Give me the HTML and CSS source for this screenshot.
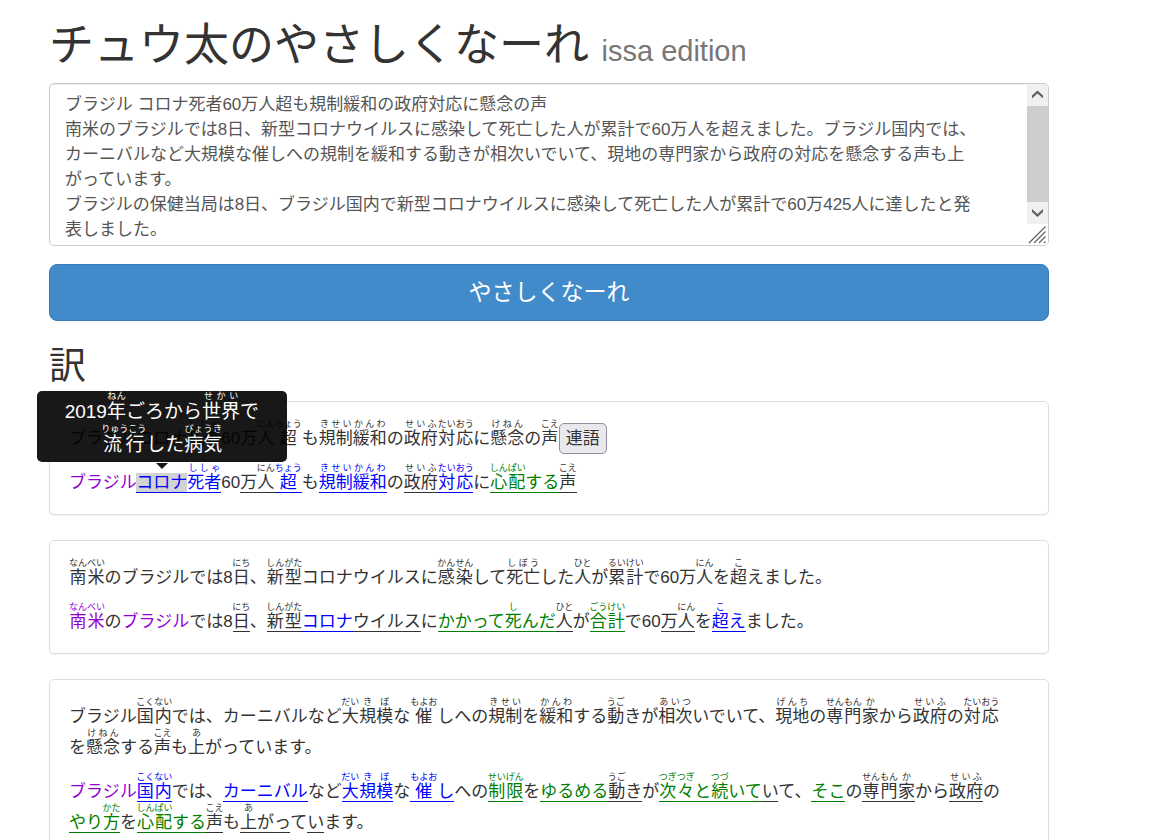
FILE: index.html
```html
<!DOCTYPE html>
<html lang="ja">
<head>
<meta charset="utf-8">
<title>チュウ太のやさしくなーれ</title>
<link rel="stylesheet" href="styles.css">
</head>
<body>
<main class="container">
  <h1 class="title">チュウ太のやさしくなーれ <small>issa edition</small></h1>
  <form class="form">
    <div class="source-box">
      <textarea class="source" aria-label="原文">ブラジル コロナ死者60万人超も規制緩和の政府対応に懸念の声
南米のブラジルでは8日、新型コロナウイルスに感染して死亡した人が累計で60万人を超えました。ブラジル国内では、カーニバルなど大規模な催しへの規制を緩和する動きが相次いでいて、現地の専門家から政府の対応を懸念する声も上がっています。
ブラジルの保健当局は8日、ブラジル国内で新型コロナウイルスに感染して死亡した人が累計で60万425人に達したと発表しました。
</textarea>
      <div class="scrollbar" aria-hidden="true">
        <svg class="arrow" viewBox="0 0 21 21"><path d="M5 11v3l5.500-5 5.500 5v-3L10.500 6z"/></svg>
        <div class="thumb"></div>
        <svg class="arrow" viewBox="0 0 21 21"><path d="M5 9.500v-3l5.500 5 5.500-5v3L10.500 14.500z"/></svg>
        <svg class="grip" viewBox="0 0 21 21"><path d="M2 19 18.500 2.500M7 19 18.500 7.500M12 19l6.500-6.500M17 19l1.500-1.500"/></svg>
      </div>
    </div>
    <button type="button" class="submit">やさしくなーれ</button>
  </form>
  <h2 class="heading">訳</h2>

  <section class="card">
    <p>ブラジルコロナ<ruby>死者<rt>ししゃ</rt></ruby>60万<ruby>人<rt>にん</rt></ruby><span class="wide"><ruby>超<rt>ちょう</rt></ruby></span>も<ruby>規制緩和<rt>きせいかんわ</rt></ruby>の<ruby>政府<rt>せいふ</rt></ruby><ruby>対応<rt>たいおう</rt></ruby>に<ruby>懸念<rt>けねん</rt></ruby>の<ruby>声<rt>こえ</rt></ruby><button type="button" class="tag">連語</button></p>
    <p><span class="name">ブラジル</span><span class="word easy active">コロナ<span class="tooltip" role="tooltip">2019<ruby>年<rt>ねん</rt></ruby>ごろから<ruby>世界<rt>せかい</rt></ruby>で<br><span class="wide"><ruby>流行<rt>りゅうこう</rt></ruby></span>した<ruby>病気<rt>びょうき</rt></ruby></span></span><span class="word easy"><ruby>死者<rt>ししゃ</rt></ruby></span>60<span class="word">万<ruby>人<rt>にん</rt></ruby></span><span class="word easy"><span class="wide"><ruby>超<rt>ちょう</rt></ruby></span></span>も<span class="word easy"><ruby>規制緩和<rt>きせいかんわ</rt></ruby></span>の<span class="word"><ruby>政府<rt>せいふ</rt></ruby></span><span class="word easy"><ruby>対応<rt>たいおう</rt></ruby></span>に<span class="word changed"><ruby>心配<rt>しんぱい</rt></ruby>する</span><span class="word"><ruby>声<rt>こえ</rt></ruby></span></p>
  </section>

  <section class="card">
    <p><ruby>南米<rt>なんべい</rt></ruby>のブラジルでは8<ruby>日<rt>にち</rt></ruby>、<ruby>新型<rt>しんがた</rt></ruby>コロナウイルスに<ruby>感染<rt>かんせん</rt></ruby>して<ruby>死亡<rt>しぼう</rt></ruby>した<ruby>人<rt>ひと</rt></ruby>が<ruby>累計<rt>るいけい</rt></ruby>で60万<ruby>人<rt>にん</rt></ruby>を<ruby>超<rt>こ</rt></ruby>えました。</p>
    <p><span class="name"><ruby>南米<rt>なんべい</rt></ruby></span>の<span class="name">ブラジル</span>では8<span class="word"><ruby>日<rt>にち</rt></ruby></span>、<span class="word"><ruby>新型<rt>しんがた</rt></ruby></span><span class="word easy">コロナ</span><span class="word">ウイルス</span>に<span class="word changed">かかって<ruby>死<rt>し</rt></ruby>んだ</span><span class="word"><ruby>人<rt>ひと</rt></ruby></span>が<span class="word changed"><ruby>合計<rt>ごうけい</rt></ruby></span>で60<span class="word">万<ruby>人<rt>にん</rt></ruby></span>を<span class="word easy"><ruby>超<rt>こ</rt></ruby>え</span>ました。</p>
  </section>

  <section class="card">
    <p>ブラジル<ruby>国内<rt>こくない</rt></ruby>では、カーニバルなど<ruby>大<rt>だい</rt></ruby><ruby>規模<rt>きぼ</rt></ruby>な<span class="wide"><ruby>催<rt>もよお</rt></ruby></span>しへの<ruby>規制<rt>きせい</rt></ruby>を<ruby>緩和<rt>かんわ</rt></ruby>する<ruby>動<rt>うご</rt></ruby>きが<ruby>相次<rt>あいつ</rt></ruby>いでいて、<ruby>現地<rt>げんち</rt></ruby>の<ruby>専門<rt>せんもん</rt></ruby><ruby>家<rt>か</rt></ruby>から<ruby>政府<rt>せいふ</rt></ruby>の<ruby>対応<rt>たいおう</rt></ruby>を<ruby>懸念<rt>けねん</rt></ruby>する<ruby>声<rt>こえ</rt></ruby>も<ruby>上<rt>あ</rt></ruby>がっています。</p>
    <p><span class="name">ブラジル</span><span class="word easy"><ruby>国内<rt>こくない</rt></ruby></span>では、<span class="word easy">カーニバル</span>など<span class="word easy"><ruby>大<rt>だい</rt></ruby><ruby>規模<rt>きぼ</rt></ruby></span>な<span class="word easy"><span class="wide"><ruby>催<rt>もよお</rt></ruby></span>し</span>への<span class="word changed"><ruby>制限<rt>せいげん</rt></ruby></span>を<span class="word changed">ゆるめる</span><span class="word"><ruby>動<rt>うご</rt></ruby>き</span>が<span class="word changed"><ruby>次々<rt>つぎつぎ</rt></ruby>と<ruby>続<rt>つづ</rt></ruby>いて</span><span class="word">い</span>て、<span class="word changed">そこ</span>の<span class="word"><ruby>専門<rt>せんもん</rt></ruby><ruby>家<rt>か</rt></ruby></span>から<span class="word"><ruby>政府<rt>せいふ</rt></ruby></span>の<span class="word changed">やり<ruby>方<rt>かた</rt></ruby></span>を<span class="word changed"><ruby>心配<rt>しんぱい</rt></ruby>する</span><span class="word"><ruby>声<rt>こえ</rt></ruby></span>も<span class="word"><ruby>上<rt>あ</rt></ruby>がっ</span>て<span class="word">い</span>ます。</p>
  </section>
</main>
</body>
</html>
```
FILE: styles.css
```css
* {
  box-sizing: border-box;
}

body {
  margin: 0;
  background: #fff;
  color: #333;
  font-family: "Liberation Sans", "Noto Sans CJK JP", sans-serif;
  font-size: 17px;
  line-height: 25px;
}

.container {
  padding: 20px 103px 0 49px;
}

.title,
.heading {
  margin: 0;
  font-weight: 400;
}

.title {
  font-size: 45px;
  line-height: 52px;
}

.title small {
  color: #777;
  font-size: 29px;
}

.form {
  display: flex;
  flex-direction: column;
  gap: 18px;
  margin-top: 6px;
}

.source-box {
  position: relative;
  display: flex;
}

.source {
  flex: 1;
  height: 163px;
  padding: 8px 71px 8px 15px;
  border: 1px solid #ccc;
  border-radius: 5px;
  box-shadow: inset 0 1px 1px rgba(0, 0, 0, 0.08);
  color: #555;
  font: inherit;
  line-height: 25px;
  resize: none;
  scrollbar-width: none;
}

/* Scroll bar and resize grip laid over the right edge of the text box */
.scrollbar {
  position: absolute;
  top: 1px;
  right: 1px;
  bottom: 1px;
  display: flex;
  flex-direction: column;
  width: 21px;
  border-radius: 0 4px 4px 0;
  overflow: hidden;
}

.thumb {
  flex: 1;
  background: #cdcdcd;
}

.arrow {
  height: 22px;
  background: #f0f0f0;
  fill: #606060;
}

.grip {
  height: 21px;
  background: #fff;
  fill: none;
  stroke: #666;
  stroke-width: 1.3;
}

.submit {
  width: 100%;
  padding: 13px 20px;
  border: 1px solid #357ebd;
  border-radius: 8px;
  background: #428bca;
  color: #fff;
  font: inherit;
  font-size: 23px;
  line-height: 29px;
}

.heading {
  margin-top: 25px;
  margin-bottom: 13px;
  font-size: 37px;
  line-height: 42px;
}

.card {
  margin-bottom: 25px;
  padding: 17px 39px 20px 19px;
  border: 1px solid #ddd;
  border-radius: 5px;
  box-shadow: 0 1px 1px rgba(0, 0, 0, 0.05);
}

.card p {
  margin: 0;
  line-height: 23px;
}

.card p + p {
  margin-top: 13px;
}

rt {
  font-size: 9px;
  line-height: 9px;
}

/* Keeps a reading that is wider than its base off the kana beside it */
.wide {
  display: inline-block;
}

.word {
  border-bottom: 1px solid currentColor;
}

.name {
  color: #9400d3;
}

.easy {
  color: #00f;
}

.changed {
  color: #008000;
}

.active {
  position: relative;
  background: #d3d3d3;
}

.tag {
  margin: -4px 0;
  padding: 2px 6px;
  border: 1px solid #8f8f9d;
  border-radius: 5px;
  background: #e9e9ed;
  color: #333;
  font: inherit;
  line-height: 25px;
}

.card .tooltip {
  position: absolute;
  bottom: calc(100% + 11px);
  left: 50%;
  width: 250px;
  padding: 9px 10px 5px;
  border-radius: 5px;
  background: #000;
  color: #fff;
  font-size: 19px;
  line-height: 24px;
  opacity: 0.9;
  text-align: center;
  transform: translateX(-50%);
}

.tooltip::after {
  content: "";
  position: absolute;
  top: calc(100% + 1px);
  left: 50%;
  margin-left: -6px;
  border: 6px solid transparent;
  border-top-color: #000;
  border-bottom-width: 0;
}
```
